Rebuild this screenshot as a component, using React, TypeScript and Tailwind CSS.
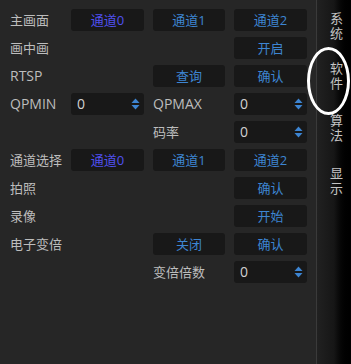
import React from "react";

const font = { fontFamily: '"Open Sans", "Noto Sans CJK SC", sans-serif' };

function Btn({ children, active }: { children: React.ReactNode; active?: boolean }) {
  return (
    <div
      className={`h-[22px] rounded-[3px] bg-[#181818] flex items-center justify-center text-[13px] leading-none ${
        active ? "text-[#5050f0]" : "text-[#3d85d2]"
      }`}
    >
      {children}
    </div>
  );
}

function Spin() {
  return (
    <div className="h-[22px] rounded-[3px] bg-[#181818] flex items-center justify-between pl-[6px] pr-[4px] text-[14px] leading-none text-[#d2d2d2]">
      <span>0</span>
      <svg width="9" height="12" viewBox="0 0 9 12">
        <path d="M4.5 0.5 L8.5 5 L0.5 5 Z" fill="#3d85d2" />
        <path d="M0.5 7 L8.5 7 L4.5 11.5 Z" fill="#3d85d2" />
      </svg>
    </div>
  );
}

function Label({ children, latin }: { children?: React.ReactNode; latin?: boolean }) {
  return (
    <div
      className={`h-[22px] flex items-center leading-none text-[#bdbdbd] whitespace-nowrap ${
        latin ? "text-[14px]" : "text-[13px]"
      }`}
    >
      {children}
    </div>
  );
}

const E = () => <div className="h-[22px]" />;

function Tab({ text, className }: { text: string; className?: string }) {
  return (
    <div
      className={`[writing-mode:vertical-rl] [text-orientation:upright] tracking-[2px] leading-[16px] h-[30px] ${
        className ?? ""
      }`}
    >
      {text}
    </div>
  );
}

export default function App() {
  return (
    <div className="w-[351px] h-[364px] bg-[#262626] flex relative overflow-hidden" style={font}>
      <div className="w-[316px] pt-[9px] pl-[10px]">
        <div className="grid grid-cols-[52px_73px_72px_73px] gap-x-[9px] gap-y-[6px]">
          <Label>主画面</Label>
          <Btn active>通道0</Btn>
          <Btn>通道1</Btn>
          <Btn>通道2</Btn>

          <Label>画中画</Label>
          <E />
          <E />
          <Btn>开启</Btn>

          <Label latin>RTSP</Label>
          <E />
          <Btn>查询</Btn>
          <Btn>确认</Btn>

          <Label latin>QPMIN</Label>
          <Spin />
          <Label latin>QPMAX</Label>
          <Spin />

          <E />
          <E />
          <Label>码率</Label>
          <Spin />

          <Label>通道选择</Label>
          <Btn active>通道0</Btn>
          <Btn>通道1</Btn>
          <Btn>通道2</Btn>

          <Label>拍照</Label>
          <E />
          <E />
          <Btn>确认</Btn>

          <Label>录像</Label>
          <E />
          <E />
          <Btn>开始</Btn>

          <Label>电子变倍</Label>
          <E />
          <Btn>关闭</Btn>
          <Btn>确认</Btn>

          <E />
          <E />
          <Label>变倍倍数</Label>
          <Spin />
        </div>
      </div>
      <div className="w-[1px] bg-[#3a3a3a]" />
      <div className="flex-1 bg-gradient-to-r from-[#212121] via-[#161616] to-[#000000] flex flex-col items-center pt-[12px] pl-[4px] text-[13px] text-[#c4c4c4]">
        <Tab text="系统" />
        <Tab text="软件" className="mt-[20px]" />
        <Tab text="算法" className="mt-[22px]" />
        <Tab text="显示" className="mt-[23px]" />
      </div>
      <div className="absolute left-[307px] top-[47px] w-[43px] h-[68px] rounded-[50%] border-[3px] border-white" />
    </div>
  );
}
